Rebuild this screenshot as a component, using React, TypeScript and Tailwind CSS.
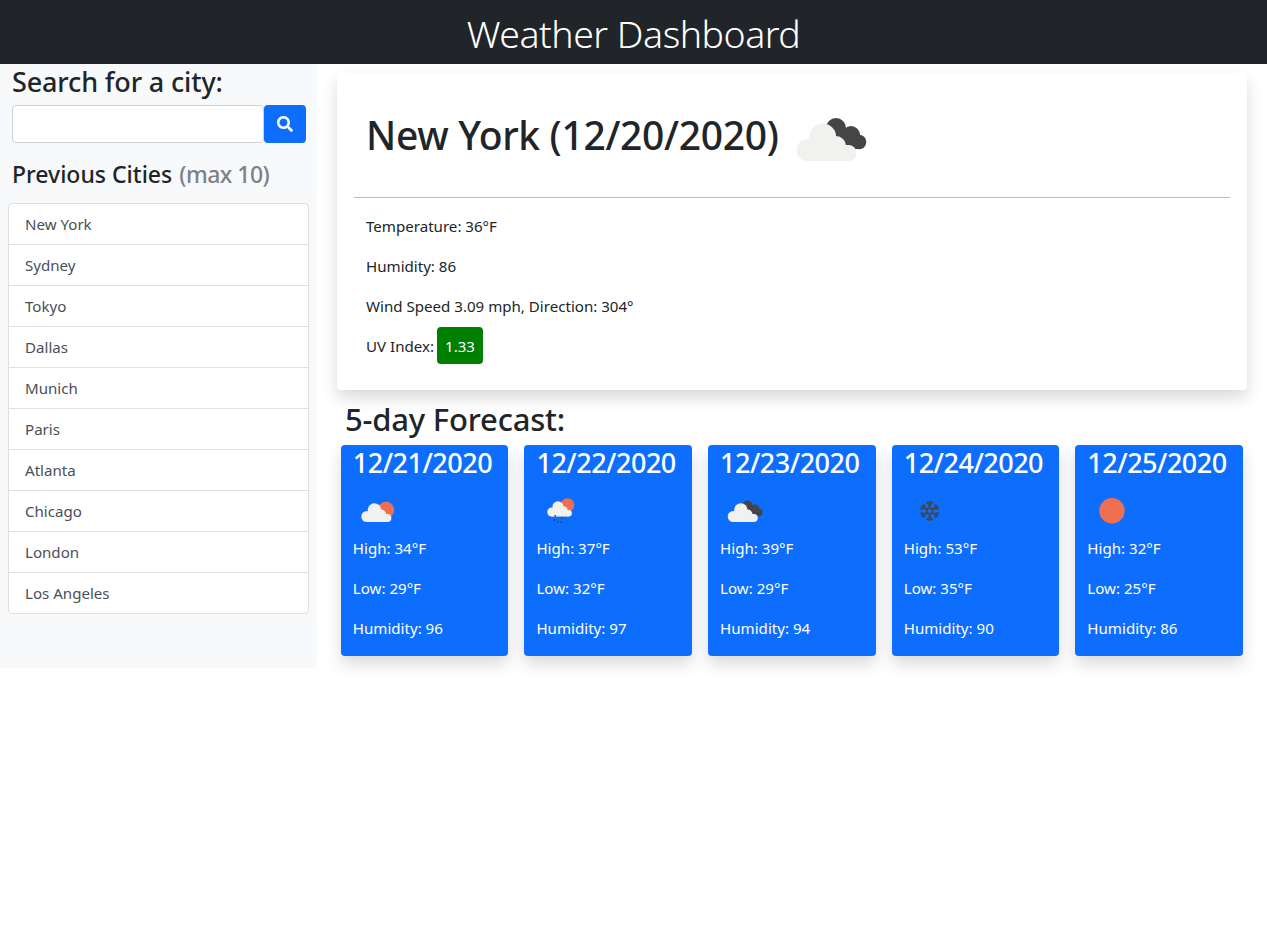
import React from "react";
import { FaSearch } from "react-icons/fa";

const cities = ["New York", "Sydney", "Tokyo", "Dallas", "Munich", "Paris", "Atlanta", "Chicago", "London", "Los Angeles"];

function Cloud({ fill = "#f1f1ef" }: { fill?: string }) {
  return (
    <g fill={fill}>
      <circle cx="26.5" cy="65" r="11" />
      <circle cx="41.7" cy="52" r="13.5" />
      <circle cx="55" cy="61" r="10" />
      <circle cx="67.5" cy="68" r="8" />
      <rect x="26" y="60" width="42" height="16" />
    </g>
  );
}

function DarkCloud() {
  return (
    <g fill="#454545">
      <circle cx="55" cy="43" r="10" />
      <circle cx="70" cy="50" r="9" />
      <circle cx="78" cy="57" r="7.3" />
      <path d="M48 42 L78 50 L80 64 L60 64 Z" />
    </g>
  );
}

function OvercastIcon({ className }: { className: string }) {
  return (
    <svg viewBox="0 0 100 100" className={className}>
      <DarkCloud />
      <Cloud />
    </svg>
  );
}

function PartlyIcon() {
  return (
    <svg viewBox="0 0 50 50" className="w-[50px] h-[50px] shrink-0">
      <circle cx="33" cy="26" r="8.2" fill="#ee7050" />
      <g transform="translate(0.6 0) scale(0.5)">
        <Cloud />
      </g>
    </svg>
  );
}

function RainIcon() {
  return (
    <svg viewBox="0 0 50 50" className="w-[50px] h-[50px] shrink-0">
      <circle cx="31.5" cy="21" r="6.8" fill="#ee7050" />
      <g transform="translate(4.9 1.4) scale(0.41)">
        <Cloud />
      </g>
      <g stroke="#444" strokeWidth="1.5" strokeLinecap="butt">
        <path d="M19.4 31 L19 32.6" />
        <path d="M18.4 35.2 L18 36.8" />
        <path d="M21.7 37.2 L21.3 38.8" />
        <path d="M25.4 37.2 L25 38.8" />
        <path d="M26.4 33.2 L26 34.8" />
      </g>
    </svg>
  );
}

function SnowIcon() {
  const arm = (
    <g>
      <path d="M25.7 23.8 V17" />
      <path d="M22.7 18 L25.7 21 L28.7 18" />
      <path d="M25.7 30.2 V37" />
      <path d="M22.7 36 L25.7 33 L28.7 36" />
    </g>
  );
  return (
    <svg viewBox="0 0 50 50" className="w-[50px] h-[50px] shrink-0" fill="none" stroke="#3f4752" strokeWidth="1.9">
      {arm}
      <g transform="rotate(60 25.7 27)">{arm}</g>
      <g transform="rotate(120 25.7 27)">{arm}</g>
      <path d="M25.7 23.8 L28.5 25.4 V28.6 L25.7 30.2 L22.9 28.6 V25.4 Z" />
    </svg>
  );
}

function SunIcon() {
  return (
    <svg viewBox="0 0 50 50" className="w-[50px] h-[50px] shrink-0">
      <circle cx="25" cy="26.7" r="12.7" fill="#ee7050" />
    </svg>
  );
}

const days = [
  { date: "12/21/2020", icon: <PartlyIcon />, high: 34, low: 29, hum: 96 },
  { date: "12/22/2020", icon: <RainIcon />, high: 37, low: 32, hum: 97 },
  { date: "12/23/2020", icon: <OvercastIcon className="w-[50px] h-[50px] shrink-0" />, high: 39, low: 29, hum: 94 },
  { date: "12/24/2020", icon: <SnowIcon />, high: 53, low: 35, hum: 90 },
  { date: "12/25/2020", icon: <SunIcon />, high: 32, low: 25, hum: 86 },
];

export default function App() {
  return (
    <div className="font-['Noto_Sans',sans-serif] text-[15.1px] leading-6 text-[#212529] bg-white min-h-[946px]">
      <header className="h-16 bg-[#212529] flex items-center justify-center pt-[3px]">
        <h1 className="text-[37.5px] leading-[48px] font-light text-white tracking-[-0.5px]">Weather Dashboard</h1>
      </header>
      <div className="flex items-start">
        <aside className="w-[317px] h-[604px] shrink-0 bg-[#f8f9fa] px-2">
          <div className="px-1">
            <h3 className="text-[27px] leading-[34px] font-medium tracking-[-0.15px] mt-px">Search for a city:</h3>
            <div className="flex mt-[6px] w-[294px]">
              <input className="w-[252px] h-[38px] bg-white border border-[#ced4da] rounded-[4px]" />
              <button className="w-[42px] h-[38px] bg-[#0d6efd] rounded-[4px] flex items-center justify-center text-white">
                <FaSearch size={16} />
              </button>
            </div>
            <h4 className="text-[23px] leading-[29px] font-medium mt-[17px]">
              Previous Cities{" "}
              <span className="text-[#7d8188] tracking-[-0.5px] ml-px">(max 10)</span>
            </h4>
          </div>
          <ul className="mt-[14px] w-[301px] border border-[#dfdfdf] rounded-[4px] bg-white">
            {cities.map((c, i) => (
              <li key={c} className={`px-4 flex items-center text-[#495057] ${i > 0 ? "h-[41px] border-t border-[#dfdfdf]" : "h-[40px]"}`}>
                {c}
              </li>
            ))}
          </ul>
        </aside>
        <main className="flex-1 min-w-0">
          <section className="mt-[9px] mx-5 h-[317px] bg-white rounded-[4px] shadow-[0_8px_16px_rgba(0,0,0,0.15)] px-[17px] pt-3">
            <div className="flex items-center h-[100px] pl-3">
              <h2 className="text-[39px] leading-[48px] font-medium tracking-[-0.33px] whitespace-nowrap">New York (12/20/2020)</h2>
              <OvercastIcon className="w-[100px] h-[100px] shrink-0 ml-[3px]" />
            </div>
            <hr className="mt-3 border-t border-[#bdbdbd]" />
            <div className="pl-3 pt-[16px]">
              <p className="mb-4">Temperature: 36°F</p>
              <p className="mb-4">Humidity: 86</p>
              <p className="mb-[9px]">Wind Speed 3.09 mph, Direction: 304°</p>
              <p className="flex items-center gap-[3px] h-[37px]">
                UV Index:
                <span className="h-[37px] w-[46px] flex items-center justify-center bg-[#008000] text-white rounded-[4px]">1.33</span>
              </p>
            </div>
          </section>
          <h3 className="ml-[28px] mt-[10px] text-[31px] leading-[38px] font-medium tracking-[-0.2px]">5-day Forecast:</h3>
          <div className="mt-[7px] ml-[23.8px] mr-6 flex gap-4">
            {days.map((d) => (
              <article key={d.date} className="flex-1 min-w-0 h-[211px] bg-[#0d6efd] rounded-[4px] text-white shadow-[0_8px_16px_rgba(0,0,0,0.15)] px-3 pt-px">
                <h4 className="text-[27px] leading-[34px] font-medium tracking-[-0.5px] whitespace-nowrap">{d.date}</h4>
                <div className="mt-1">{d.icon}</div>
                <div className="mt-[2px]">
                  <p className="mb-4">High: {d.high}°F</p>
                  <p className="mb-4">Low: {d.low}°F</p>
                  <p>Humidity: {d.hum}</p>
                </div>
              </article>
            ))}
          </div>
        </main>
      </div>
    </div>
  );
}
